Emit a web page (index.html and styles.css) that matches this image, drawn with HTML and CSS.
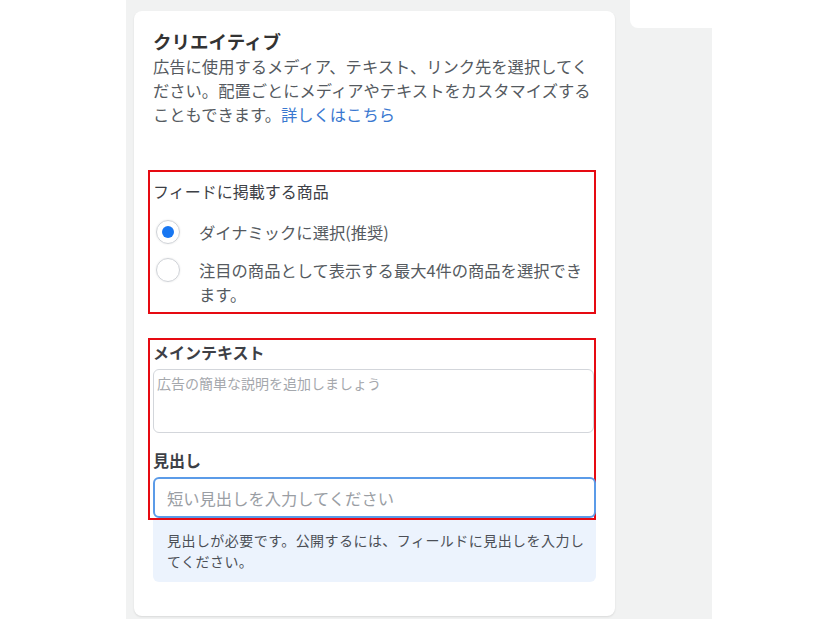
FILE: index.html
```html
<!DOCTYPE html>
<html lang="ja">
<head>
  <meta charset="UTF-8">
  <link rel="stylesheet" href="styles.css">
</head>
<body>

  <div class="stage">
    <section class="card">
      <h2 class="card-title">クリエイティブ</h2>
      <p class="card-desc">広告に使用するメディア、テキスト、リンク先を選択してください。配置ごとにメディアやテキストをカスタマイズすることもできます。<a href="#">詳しくはこちら</a></p>

      <div class="highlight feed">
        <div class="feed-label">フィードに掲載する商品</div>
        <label class="radio-row">
          <span class="radio checked"></span>
          <span class="radio-text">ダイナミックに選択(推奨)</span>
        </label>
        <label class="radio-row">
          <span class="radio"></span>
          <span class="radio-text">注目の商品として表示する最大4件の商品を選択できます。</span>
        </label>
      </div>

      <div class="highlight fields">
        <div class="field-label">メインテキスト</div>
        <textarea class="main-text" placeholder="広告の簡単な説明を追加しましょう"></textarea>
        <div class="field-label headline-label">見出し</div>
        <input class="headline" type="text" placeholder="短い見出しを入力してください">
      </div>

      <div class="notice">見出しが必要です。公開するには、フィールドに見出しを入力してください。</div>
    </section>

    <div class="side-tab"></div>
  </div>

</body>
</html>
```

FILE: styles.css
```css
body {
  margin: 0;
  background: #fff;
  font-family: "Noto Sans CJK JP", "Noto Sans", sans-serif;
  color: #4b4f56;
}

.stage {
  display: flex;
  align-items: flex-start;
  margin-left: 126px;
  width: 586px;
  height: 619px;
  background: #f1f2f2;
}

.card {
  box-sizing: border-box;
  width: 481px;
  margin: 11px 0 0 8px;
  padding: 18px 19px 34px 19px;
  background: #fff;
  border-radius: 8px;
  box-shadow: 0 1px 2px rgba(0, 0, 0, 0.1);
}

.card-title {
  margin: 0;
  font-size: 18.5px;
  line-height: 24px;
  font-weight: bold;
  color: #333;
}

.card-desc {
  margin: 1px 0 0;
  font-size: 16.3px;
  line-height: 24px;
  color: #555a60;
}

.card-desc a {
  color: #3a78d0;
  text-decoration: none;
}

/* red annotation boxes */
.highlight {
  border: 2px solid #e60a12;
  margin-left: -5px;
  padding-left: 3px;
}

.feed {
  margin-top: 44px;
  padding-top: 7px;
  padding-bottom: 6px;
}

.feed-label {
  font-size: 16px;
  line-height: 24px;
  color: #3d4046;
}

.radio-row {
  display: flex;
  align-items: flex-start;
  margin-top: 14px;
}

.feed-label + .radio-row {
  margin-top: 17px;
}

.radio {
  box-sizing: border-box;
  flex: none;
  width: 24px;
  height: 24px;
  margin-left: 3px;
  border: 1px solid #cfd2d7;
  border-radius: 50%;
  display: flex;
  align-items: center;
  justify-content: center;
  box-shadow: 0 0 2px rgba(0, 0, 0, 0.1);
}

.radio.checked::after {
  content: "";
  width: 12px;
  height: 12px;
  border-radius: 50%;
  background: #1877f2;
}

.radio-text {
  margin-left: 19px;
  font-size: 16.3px;
  line-height: 24px;
  color: #555a60;
}

.fields {
  margin-top: 24px;
  padding-top: 2px;
}

.field-label {
  font-size: 16px;
  line-height: 20px;
  font-weight: bold;
  color: #3d4046;
}

.headline-label {
  margin-top: 17px;
}

.main-text {
  display: block;
  box-sizing: border-box;
  width: 100%;
  height: 64px;
  margin-top: 7px;
  padding: 4px 3px;
  border: 1px solid #d3d6db;
  border-radius: 6px;
  resize: none;
  font-family: "Noto Sans CJK JP", "Noto Sans", sans-serif;
  font-size: 14px;
  line-height: 18px;
}

.main-text::placeholder {
  color: #a5a8ad;
}

.headline {
  display: block;
  box-sizing: border-box;
  width: calc(100% + 2px);
  height: 41px;
  margin-top: 7px;
  padding: 0 12px;
  border: 2px solid #5b9be8;
  border-radius: 6px;
  outline: none;
  font-family: "Noto Sans CJK JP", "Noto Sans", sans-serif;
  font-size: 16.3px;
}

.headline::placeholder {
  color: #9a9ea4;
}

.notice {
  padding: 10px 8px 10px 14px;
  background: #ecf3fd;
  border-radius: 0 0 6px 6px;
  font-size: 14px;
  letter-spacing: 0.45px;
  line-height: 21px;
  color: #4b4f56;
}

.side-tab {
  width: 82px;
  height: 28px;
  margin-left: 15px;
  background: #fff;
  border-bottom-left-radius: 8px;
}
```
